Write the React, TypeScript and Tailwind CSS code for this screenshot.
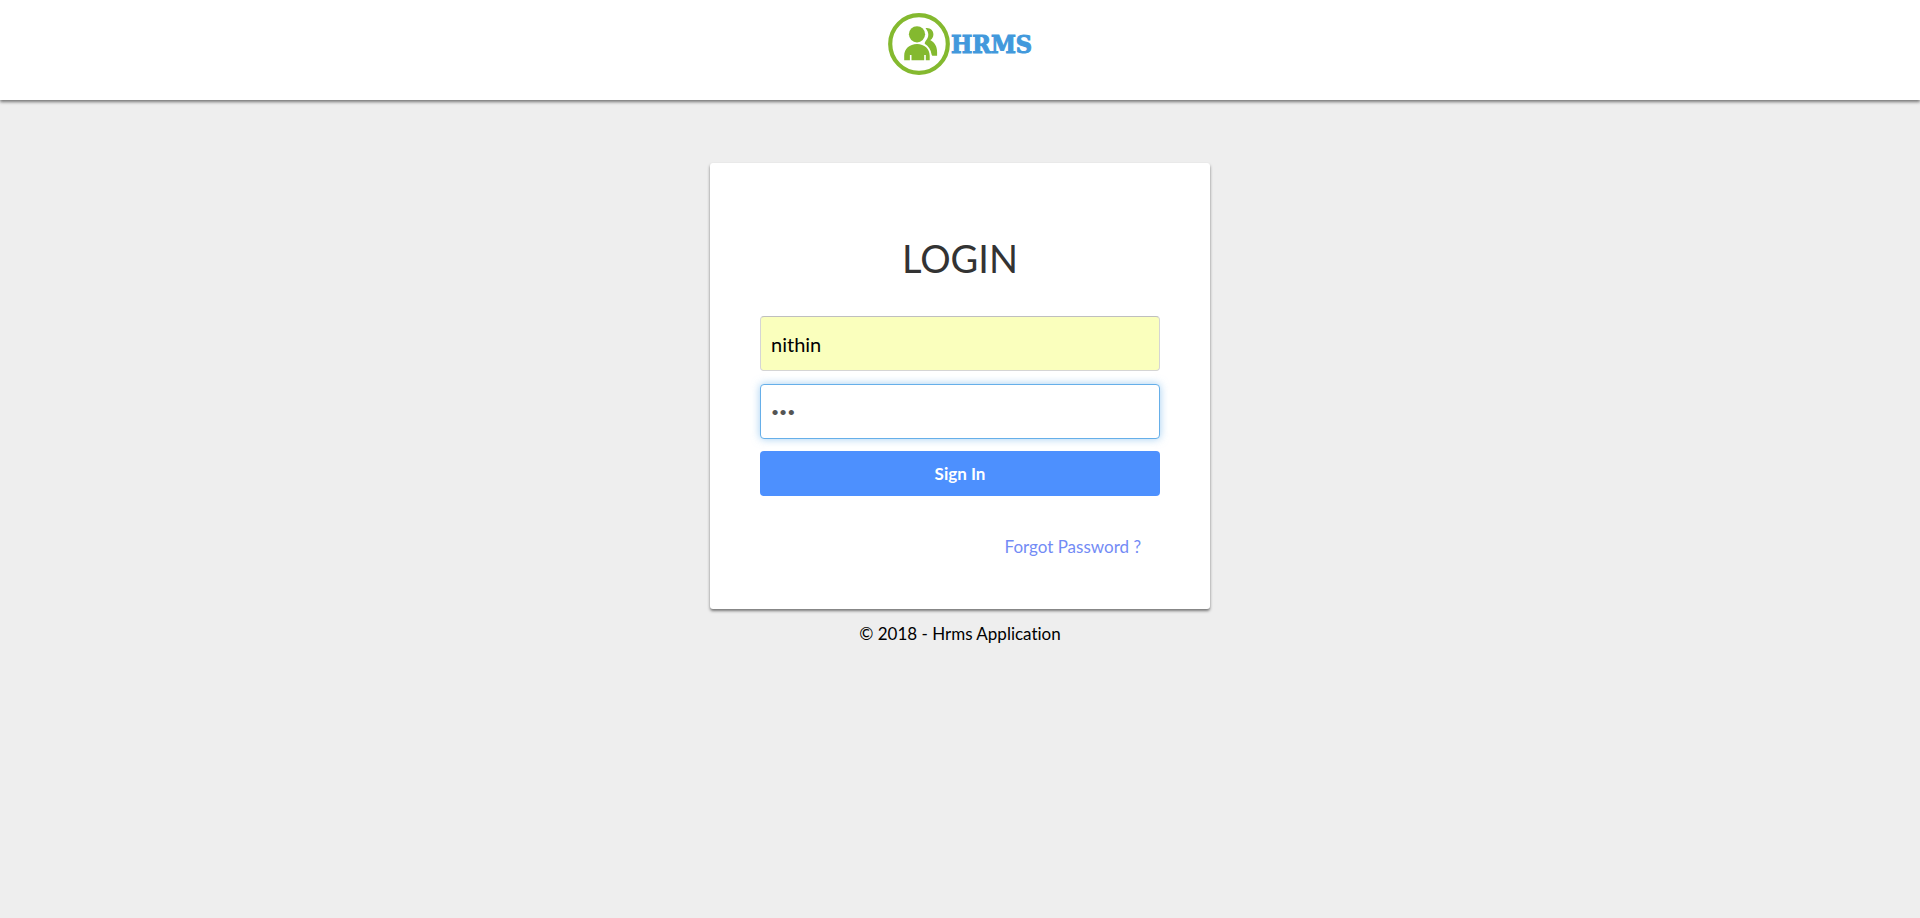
import React from "react";

function Logo() {
  return (
    <a href="#" aria-label="HRMS home" className="flex items-center gap-px">
      <svg viewBox="0 0 62 62" className="size-[62px]" fill="#84b92f" aria-hidden="true">
        <circle cx="31" cy="31" r="28.8" fill="none" stroke="#84b92f" strokeWidth="4.2" />
        <circle cx="29" cy="21.3" r="8.1" />
        <path d="M16.2 47.3v-4.6C16.2 36 21.5 31 29 31s12.700 5 12.700 11.700v4.600h-3.900v-5.200h-1.600v5.200H23.500v-5.200h-1.600v5.200z" />
        <path d="M37.500 15.200c4.400-.8 7.900 2.300 7.900 6.200 0 2.400-1.300 4.500-3.200 5.700 4.300 2.100 6.900 6.600 6.900 11.900v3.700h-4.200c-.7 0-1.100-.3-1.300-1.200-.8-4.900-3-8.300-6.900-10.700 0-1 .3-2 1.100-3.100 3.500-3.900 3.300-8.500-.3-12.500z" />
      </svg>
      <span className="font-['DejaVu_Serif_Condensed','DejaVu_Serif',serif] text-[25px] leading-none font-bold text-[#4299dc] [-webkit-text-stroke:1px_#4299dc]">
        HRMS
      </span>
    </a>
  );
}

const fieldClass = "h-[55px] w-full rounded border px-2.5 outline-none";

export default function App() {
  return (
    <div className="min-h-screen bg-[#eee] font-[Lato,sans-serif] text-[17px] text-black [font-variant-ligatures:none]">
      <header className="flex h-[100px] justify-center bg-white pt-[13px] shadow-[0_2px_3px_rgba(0,0,0,0.5)]">
        <div className="h-[62px]">
          <Logo />
        </div>
      </header>

      <main className="mx-auto mt-[63px] w-full max-w-[500px]">
        <section className="rounded-[3px] bg-white px-[50px] pt-[70px] pb-12 shadow-[0_2px_3px_rgba(0,0,0,0.5)]">
          <h1 className="text-center text-[38px] leading-[50px] text-[#333]">LOGIN</h1>
          <form className="mt-[33px] flex flex-col" onSubmit={(e) => e.preventDefault()}>
            <input
              type="text"
              aria-label="Username"
              defaultValue="nithin"
              className={`${fieldClass} border-[#d5d5d5] border-t-[#bfbfbf] bg-[#faffbd] text-xl text-black`}
            />
            <input
              type="password"
              aria-label="Password"
              defaultValue="123"
              className={`${fieldClass} mt-[13px] border-[#66afe9] bg-white text-sm text-[#555] shadow-[0_0_8px_rgba(102,175,233,0.6)]`}
            />
            <button type="submit" className="mt-3 h-[45px] rounded bg-[#4d90fe] font-bold text-white">
              Sign In
            </button>
          </form>
          <div className="mt-[37px] pr-[19px] text-right leading-7">
            <a href="#" className="text-[#738bf5]">Forgot Password ?</a>
          </div>
        </section>
      </main>
      <footer className="pt-[11px] text-center leading-7">© 2018 - Hrms Application</footer>
    </div>
  );
}
